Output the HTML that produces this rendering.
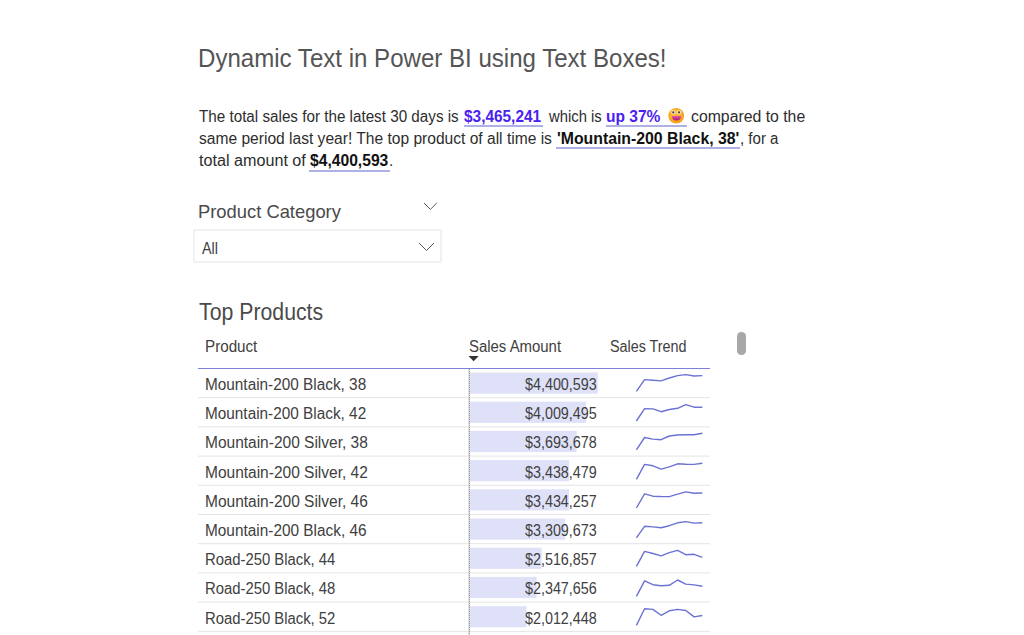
<!DOCTYPE html>
<html><head><meta charset="utf-8">
<style>
*{margin:0;padding:0;box-sizing:border-box}
html,body{width:1024px;height:635px;overflow:hidden;background:#fff}
body{position:relative;font-family:"Liberation Sans",sans-serif}
.t{position:absolute;white-space:nowrap;line-height:1;transform-origin:0 0}
.b{position:absolute}
</style></head><body>
<div class="b" style="left:463.5px;top:125px;width:79.2px;height:2px;background:#aeb1e6"></div>
<div class="b" style="left:606px;top:125px;width:81.4px;height:2px;background:#aeb1e6"></div>
<div class="b" style="left:556px;top:147px;width:184.0px;height:2px;background:#aeb1e6"></div>
<div class="b" style="left:309.3px;top:170px;width:80.4px;height:1.5px;background:#aeb1e6"></div>
<svg class="b" style="left:667px;top:107px" width="18" height="18" viewBox="667 107 18 18">
<defs><radialGradient id="eg" cx="0.45" cy="0.35" r="0.7"><stop offset="0" stop-color="#ffc23a"/><stop offset="1" stop-color="#f59a16"/></radialGradient>
<linearGradient id="mg" x1="0" y1="0" x2="0" y2="1"><stop offset="0" stop-color="#e35aa6"/><stop offset="1" stop-color="#b0157a"/></linearGradient></defs>
<ellipse cx="676.2" cy="115.7" rx="7.9" ry="7.8" fill="url(#eg)"/>
<circle cx="673.3" cy="112.4" r="2.1" fill="#fbe7c8"/><circle cx="679.1" cy="112.4" r="2.1" fill="#fbe7c8"/>
<circle cx="673.3" cy="112.4" r="1.1" fill="#4b3b47"/><circle cx="679.1" cy="112.4" r="1.1" fill="#4b3b47"/>
<path d="M671.9 116.2 Q676.5 115.4 681.1 116.2 Q681 120.6 676.5 120.6 Q672 120.6 671.9 116.2Z" fill="url(#mg)"/>
</svg>
<div class="b" style="left:193px;top:229px;width:249px;height:33.5px;border:2px solid #f2f2f2"></div>
<svg class="b" style="left:0;top:0" width="1024" height="635"><g fill="none" stroke="#505050" stroke-width="0.95"><polyline points="424,203 430.4,209.4 436.8,203"/><polyline points="419,243 426.5,250.5 434,243"/></g><path d="M468.5 356 L478.7 356 L473.6 361.2Z" fill="#333"/></svg>
<svg class="b" style="left:0;top:0" width="1024" height="635"><rect x="198" y="368" width="512" height="1" fill="#7c80d8"/><rect x="198" y="397.20" width="512" height="1" fill="#e4e4e4"/><rect x="198" y="426.40" width="512" height="1" fill="#e4e4e4"/><rect x="198" y="455.60" width="512" height="1" fill="#e4e4e4"/><rect x="198" y="484.80" width="512" height="1" fill="#e4e4e4"/><rect x="198" y="514.00" width="512" height="1" fill="#e4e4e4"/><rect x="198" y="543.20" width="512" height="1" fill="#e4e4e4"/><rect x="198" y="572.40" width="512" height="1" fill="#e4e4e4"/><rect x="198" y="601.60" width="512" height="1" fill="#e4e4e4"/><rect x="198" y="630.80" width="512" height="1" fill="#e4e4e4"/><rect x="469.5" y="372.50" width="128.3" height="21.20" fill="#dfe1f9"/><rect x="469.5" y="401.70" width="116.6" height="21.20" fill="#dfe1f9"/><rect x="469.5" y="430.90" width="107.2" height="21.20" fill="#dfe1f9"/><rect x="469.5" y="460.10" width="99.6" height="21.20" fill="#dfe1f9"/><rect x="469.5" y="489.30" width="99.5" height="21.20" fill="#dfe1f9"/><rect x="469.5" y="518.50" width="95.8" height="21.20" fill="#dfe1f9"/><rect x="469.5" y="547.70" width="72.1" height="21.20" fill="#dfe1f9"/><rect x="469.5" y="576.90" width="67.1" height="21.20" fill="#dfe1f9"/><rect x="469.5" y="606.10" width="57.1" height="21.20" fill="#dfe1f9"/></svg>
<div class="b" style="left:468px;top:369px;width:1px;height:266px;background:#e2e2e2"></div>
<div class="b" style="left:469px;top:369px;width:1px;height:266px;background:repeating-linear-gradient(to bottom,#9a9a9a 0,#9a9a9a 1px,#d6d6d6 1px,#d6d6d6 2px)"></div>
<svg class="b" style="left:0;top:0" width="1024" height="635"><g fill="none" stroke="#6c72d2" stroke-width="1.4" stroke-linejoin="round"><polyline points="636.4,391.3 644.6,379.6 652.9,380.3 661.1,380.9 669.3,378.0 677.6,375.6 685.8,374.6 694.1,376.0 702.3,375.6"/><polyline points="636.4,421.0 644.6,408.7 652.9,408.9 661.1,411.7 669.3,409.5 677.6,408.3 685.8,404.6 694.1,407.2 702.3,407.3"/><polyline points="636.4,449.8 644.6,437.5 652.9,439.1 661.1,439.7 669.3,436.0 677.6,435.0 685.8,434.8 694.1,434.8 702.3,433.2"/><polyline points="636.4,479.4 644.6,464.4 652.9,465.8 661.1,469.1 669.3,466.9 677.6,463.8 685.8,464.2 694.1,464.4 702.3,463.2"/><polyline points="636.4,508.0 644.6,493.8 652.9,496.2 661.1,496.5 669.3,496.6 677.6,494.2 685.8,491.9 694.1,493.2 702.3,493.0"/><polyline points="636.4,537.8 644.6,526.3 652.9,526.9 661.1,527.8 669.3,525.7 677.6,522.8 685.8,521.6 694.1,523.1 702.3,522.8"/><polyline points="636.4,566.4 644.6,551.4 652.9,553.5 661.1,555.9 669.3,552.6 677.6,550.3 685.8,554.7 694.1,554.3 702.3,557.3"/><polyline points="636.4,596.4 644.6,580.8 652.9,584.7 661.1,585.7 669.3,585.3 677.6,580.0 685.8,584.1 694.1,584.9 702.3,586.3"/><polyline points="636.4,625.4 644.6,608.8 652.9,609.4 661.1,615.3 669.3,610.8 677.6,609.4 685.8,610.5 694.1,616.9 702.3,615.5"/></g></svg>
<div class="b" style="left:737.3px;top:332.3px;width:8.5px;height:22.7px;border-radius:4.25px;background:#a8a8a8"></div>
<div class="t" style="left:198.15px;top:45px;font-size:26px;font-weight:400;color:#555555;transform:scaleX(0.9255)">Dynamic Text in Power BI using Text Boxes!</div>
<div class="t" style="left:198.60px;top:109px;font-size:16px;font-weight:400;color:#2d2d2d;transform:scaleX(0.9512)">The total sales for the latest 30 days is</div>
<div class="t" style="left:464.20px;top:109px;font-size:16px;font-weight:700;color:#4a22ef;transform:scaleX(0.9628)">$3,465,241</div>
<div class="t" style="left:548.53px;top:109px;font-size:16px;font-weight:400;color:#2d2d2d;transform:scaleX(0.9256)">which is</div>
<div class="t" style="left:606.33px;top:109px;font-size:16px;font-weight:700;color:#4a22ef;transform:scaleX(0.9710)">up 37%</div>
<div class="t" style="left:691.30px;top:109px;font-size:16px;font-weight:400;color:#2d2d2d;transform:scaleX(0.9877)">compared to the</div>
<div class="t" style="left:198.50px;top:131px;font-size:16px;font-weight:400;color:#2d2d2d;transform:scaleX(0.9734)">same period last year! The top product of all time is</div>
<div class="t" style="left:557.00px;top:131px;font-size:16px;font-weight:700;color:#111111;transform:scaleX(0.9878)">'Mountain-200 Black, 38'</div>
<div class="t" style="left:739.76px;top:131px;font-size:16px;font-weight:400;color:#2d2d2d;transform:scaleX(0.9398)">, for a</div>
<div class="t" style="left:198.50px;top:153px;font-size:16px;font-weight:400;color:#2d2d2d;transform:scaleX(1.0094)">total amount of</div>
<div class="t" style="left:309.90px;top:153px;font-size:16px;font-weight:700;color:#111111;transform:scaleX(0.9778)">$4,400,593</div>
<div class="t" style="left:389.35px;top:153px;font-size:16px;font-weight:400;color:#2d2d2d;transform:scaleX(0.9500)">.</div>
<div class="t" style="left:197.63px;top:202px;font-size:19px;font-weight:400;color:#4a4a4a;transform:scaleX(0.9664)">Product Category</div>
<div class="t" style="left:202.17px;top:241px;font-size:16px;font-weight:400;color:#404040;transform:scaleX(0.8955)">All</div>
<div class="t" style="left:198.80px;top:301px;font-size:23px;font-weight:400;color:#4a4a4a;transform:scaleX(0.9249)">Top Products</div>
<div class="t" style="left:205.15px;top:339px;font-size:16px;font-weight:400;color:#404040;transform:scaleX(0.9489)">Product</div>
<div class="t" style="left:468.50px;top:339px;font-size:16px;font-weight:400;color:#404040;transform:scaleX(0.9325)">Sales Amount</div>
<div class="t" style="left:610.00px;top:339px;font-size:16px;font-weight:400;color:#404040;transform:scaleX(0.8965)">Sales Trend</div>
<div class="t" style="left:204.94px;top:377px;font-size:16px;font-weight:400;color:#404040;transform:scaleX(0.9587)">Mountain-200 Black, 38</div>
<div class="t" style="left:524.50px;top:377px;font-size:16px;font-weight:400;color:#404040;transform:scaleX(0.8955)">$4,400,593</div>
<div class="t" style="left:204.94px;top:406px;font-size:16px;font-weight:400;color:#404040;transform:scaleX(0.9587)">Mountain-200 Black, 42</div>
<div class="t" style="left:524.50px;top:406px;font-size:16px;font-weight:400;color:#404040;transform:scaleX(0.8955)">$4,009,495</div>
<div class="t" style="left:204.93px;top:435px;font-size:16px;font-weight:400;color:#404040;transform:scaleX(0.9683)">Mountain-200 Silver, 38</div>
<div class="t" style="left:524.50px;top:435px;font-size:16px;font-weight:400;color:#404040;transform:scaleX(0.8955)">$3,693,678</div>
<div class="t" style="left:204.93px;top:465px;font-size:16px;font-weight:400;color:#404040;transform:scaleX(0.9683)">Mountain-200 Silver, 42</div>
<div class="t" style="left:524.50px;top:465px;font-size:16px;font-weight:400;color:#404040;transform:scaleX(0.8955)">$3,438,479</div>
<div class="t" style="left:204.93px;top:494px;font-size:16px;font-weight:400;color:#404040;transform:scaleX(0.9683)">Mountain-200 Silver, 46</div>
<div class="t" style="left:524.50px;top:494px;font-size:16px;font-weight:400;color:#404040;transform:scaleX(0.8955)">$3,434,257</div>
<div class="t" style="left:204.94px;top:523px;font-size:16px;font-weight:400;color:#404040;transform:scaleX(0.9611)">Mountain-200 Black, 46</div>
<div class="t" style="left:524.50px;top:523px;font-size:16px;font-weight:400;color:#404040;transform:scaleX(0.8955)">$3,309,673</div>
<div class="t" style="left:204.97px;top:552px;font-size:16px;font-weight:400;color:#404040;transform:scaleX(0.9274)">Road-250 Black, 44</div>
<div class="t" style="left:524.50px;top:552px;font-size:16px;font-weight:400;color:#404040;transform:scaleX(0.8955)">$2,516,857</div>
<div class="t" style="left:204.97px;top:581px;font-size:16px;font-weight:400;color:#404040;transform:scaleX(0.9274)">Road-250 Black, 48</div>
<div class="t" style="left:524.50px;top:581px;font-size:16px;font-weight:400;color:#404040;transform:scaleX(0.8955)">$2,347,656</div>
<div class="t" style="left:204.97px;top:611px;font-size:16px;font-weight:400;color:#404040;transform:scaleX(0.9274)">Road-250 Black, 52</div>
<div class="t" style="left:524.50px;top:611px;font-size:16px;font-weight:400;color:#404040;transform:scaleX(0.8955)">$2,012,448</div>
</body></html>
